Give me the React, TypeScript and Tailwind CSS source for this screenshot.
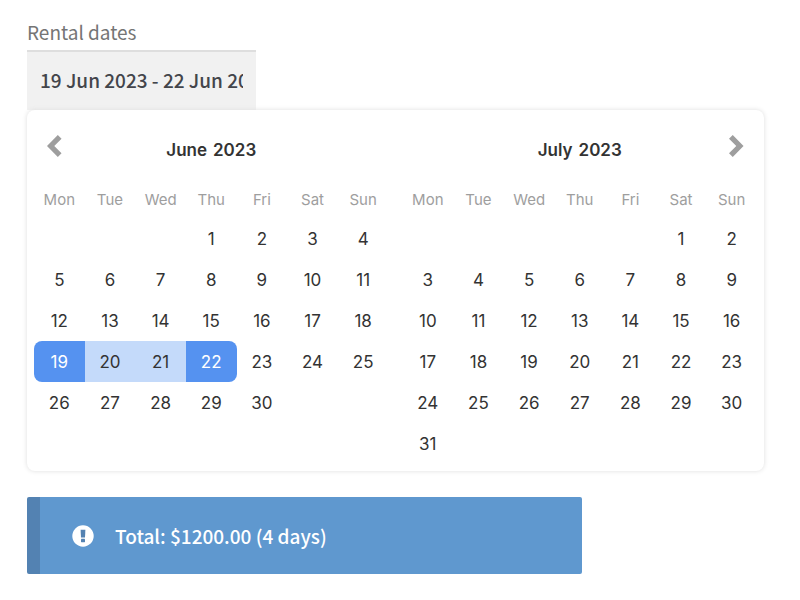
import React, { useState } from "react";
import clsx from "clsx";

const WEEKDAYS = ["Mon", "Tue", "Wed", "Thu", "Fri", "Sat", "Sun"];

const MONTHS = [
  { name: "June", year: 2023, index: 5 },
  { name: "July", year: 2023, index: 6 },
];

const START = new Date(2023, 5, 19).getTime();
const END = new Date(2023, 5, 22).getTime();

// weeks start on monday, empty cells are null
const getWeeks = (year: number, month: number) => {
  const offset = (new Date(year, month, 1).getDay() + 6) % 7;
  const total = new Date(year, month + 1, 0).getDate();
  const weeks: (number | null)[][] = [];
  for (let i = 0; i < offset + total; i += 7) {
    weeks.push(
      WEEKDAYS.map((_, d) => {
        const day = i + d - offset + 1;
        return day > 0 && day <= total ? day : null;
      })
    );
  }
  return weeks;
};

type MonthProps = {
  name: string;
  year: number;
  index: number;
};

const Month = ({ name, year, index }: MonthProps) => {
  return (
    <div className="min-w-0 flex-1 px-[7px]">
      <div className="flex h-20 items-center justify-between px-[13px]">
        <div className="w-5 pb-2">
          {index === 5 && (
            <button type="button" aria-label="Previous month" className="block cursor-pointer text-[#9e9e9e]">
              <svg width="15" height="22" viewBox="0 0 11 16" fill="currentColor">
                <path d="M7.919 0l2.748 2.667L5.333 8l5.334 5.333L7.919 16 0 8z" />
              </svg>
            </button>
          )}
        </div>
        <h2 className="flex gap-1.5 text-[17px] leading-6 font-semibold text-[#333]">
          <span>{name}</span>
          <span>{year}</span>
        </h2>
        <div className="flex w-5 justify-end pb-2">
          {index === 6 && (
            <button type="button" aria-label="Next month" className="block cursor-pointer text-[#9e9e9e]">
              <svg width="15" height="22" viewBox="0 0 11 16" fill="currentColor">
                <path d="M2.748 16L0 13.333 5.333 8 0 2.667 2.748 0l7.919 8z" />
              </svg>
            </button>
          )}
        </div>
      </div>
      <table className="w-full table-fixed border-collapse text-center">
        <thead>
          <tr>
            {WEEKDAYS.map((day) => (
              <th key={day} scope="col" className="h-7 p-0 pb-2 text-[15px] leading-5 font-normal text-[#9e9e9e]">
                {day}
              </th>
            ))}
          </tr>
        </thead>
        <tbody>
          {getWeeks(year, index).map((week, i) => (
            <tr key={i}>
              {week.map((day, j) => {
                const time = day ? new Date(year, index, day).getTime() : 0;
                const isStart = time === START;
                const isEnd = time === END;
                return (
                  <td key={j} className="h-[41px] p-0">
                    {day && (
                      <button
                        type="button"
                        className={clsx(
                          "block h-[41px] w-full cursor-pointer text-[17px] leading-5",
                          isStart || isEnd ? "bg-[#5592f0] text-white" : "text-[#333]",
                          isStart && "rounded-l-lg",
                          isEnd && "rounded-r-lg",
                          time > START && time < END && "bg-[#c4dafa]"
                        )}
                      >
                        {day}
                      </button>
                    )}
                  </td>
                );
              })}
            </tr>
          ))}
        </tbody>
      </table>
    </div>
  );
};

const App = () => {
  const [dates, setDates] = useState("19 Jun 2023 - 22 Jun 2023");

  return (
    <main className="min-h-screen bg-white pt-[18px] pr-9 pb-6 pl-[27px] font-['Noto_Sans_CJK_SC',sans-serif]">
      <label htmlFor="rental-dates" className="block h-8 text-[19px] leading-7 text-[#757575]">
        Rental dates
      </label>
      <input
        id="rental-dates"
        type="text"
        value={dates}
        onChange={(e) => setDates(e.target.value)}
        className="block h-[60px] w-[229px] border-t-2 border-[#dedede] bg-[#f1f1f1] px-[13px] pb-1 text-[19px] font-medium text-[#43454b] outline-none"
      />

      <section
        aria-label="Choose rental dates"
        className="flex rounded-lg bg-white pb-[7px] font-['Inter',sans-serif] shadow-[0_0_5px_#ddd]"
      >
        {MONTHS.map((month) => (
          <Month key={month.name} {...month} />
        ))}
      </section>

      <div
        role="status"
        className="mt-[26px] flex h-[77px] w-full max-w-[555px] items-center gap-[21px] rounded-xs border-l-[13px] border-[#5382b2] bg-[#5f98cf] pl-8 text-white"
      >
        <svg width="22" height="22" viewBox="0 0 22 22" aria-hidden="true">
          <circle cx="11" cy="11" r="10.7" fill="#fff" />
          <path d="M8.600 4.800h4.800l-.4 7.800H9z" fill="#5382b2" />
          <rect x="9" y="13.800" width="4" height="3.400" rx=".4" fill="#5382b2" />
        </svg>
        <p className="text-[19px] leading-7 font-medium">Total: $1200.00 (4 days)</p>
      </div>
    </main>
  );
};

export default App;
